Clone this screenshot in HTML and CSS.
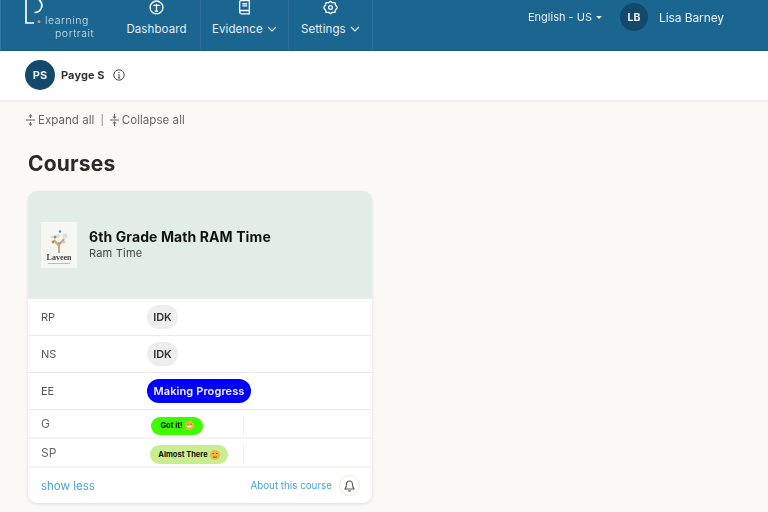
FILE: index.html
```html
<!DOCTYPE html>
<html lang="en">
<head>
<meta charset="utf-8">
<title>Learning Portrait</title>
<link rel="stylesheet" href="styles.css">
</head>
<body>
<div class="page">
<header class="topbar">
  <div class="logo">
    <svg class="logo-mark" width="20" height="26" viewBox="0 0 20 26"><path d="M1 0V23H9M9.500 12.500C16 12.500 20 5 13.500 -1" fill="none" stroke="#fff" stroke-width="1.700"/><circle cx="14" cy="21.700" r="1.400" fill="#e8963a"/></svg>
    <div class="logo-text"><span>learning</span><span class="logo-second">portrait</span></div>
  </div>
  <nav class="nav">
    <a class="nav-item nav-dash">
      <svg class="nav-icon" width="15" height="15" viewBox="0 0 14 14"><circle cx="7" cy="7" r="6" fill="none" stroke="#fff" stroke-width="1.300"/><path d="M4 5H10M7 3.500V10.500M5.500 10.500H8.500" fill="none" stroke="#fff" stroke-width="1.200"/></svg>
      <span>Dashboard</span>
    </a>
    <a class="nav-item nav-ev">
      <svg class="nav-icon" width="15" height="15" viewBox="0 0 14 14"><path d="M2.500 11V2C2.500 1 3 .5 4 .5H11.500V13H4C3 13 2.500 12.300 2.500 11.300C2.500 10.300 3 9.800 4 9.800H11.500M5 3.500H9.500M5 5.500H9.500" fill="none" stroke="#fff" stroke-width="1.200"/></svg>
      <span>Evidence <svg class="chev" width="10" height="6" viewBox="0 0 10 6"><path d="M1 1L5 5L9 1" fill="none" stroke="#e6eef4" stroke-width="1.200"/></svg></span>
    </a>
    <a class="nav-item nav-set">
      <svg class="nav-icon" width="15" height="15" viewBox="0 0 24 24"><circle cx="12" cy="12" r="3" fill="none" stroke="#fff" stroke-width="2"/><path d="M12 2L15 4.500L19 4L20 8L22.500 11V13L20 16L19 20L15 19.500L12 22L9 19.500L5 20L4 16L1.500 13V11L4 8L5 4L9 4.500Z" fill="none" stroke="#fff" stroke-width="2" stroke-linejoin="round"/></svg>
      <span>Settings <svg class="chev" width="10" height="6" viewBox="0 0 10 6"><path d="M1 1L5 5L9 1" fill="none" stroke="#e6eef4" stroke-width="1.200"/></svg></span>
    </a>
  </nav>
  <div class="account">
    <span class="lang">English - US <i class="caret"></i></span>
    <span class="avatar avatar-user">LB</span>
    <span class="user-name">Lisa Barney</span>
  </div>
</header>

<section class="student">
  <span class="avatar avatar-student">PS</span>
  <strong class="student-name">Payge S</strong>
  <svg width="12" height="12" viewBox="0 0 12 12"><circle cx="6" cy="6" r="5.200" fill="none" stroke="#444" stroke-width="1"/><path d="M6 5V9M6 3V4M4.800 9H7.200" fill="none" stroke="#444" stroke-width="1"/></svg>
</section>

<main class="content">
  <div class="toggles">
    <svg width="9" height="12" viewBox="0 0 9 12"><path d="M0 6H9" stroke="#666" stroke-width="1"/><path d="M4.500 4V1M4.500 8V11" stroke="#666"/><path d="M2.500 2.500L4.500 0L6.500 2.500ZM2.500 9.500L4.500 12L6.500 9.500Z" fill="#666"/></svg>
    <span class="toggle-label">Expand all</span>
    <span class="toggle-sep">|</span>
    <svg width="9" height="12" viewBox="0 0 9 12"><path d="M0 6H9" stroke="#666" stroke-width="1"/><path d="M4.500 0V3M4.500 12V9" stroke="#666"/><path d="M2.500 2.500L4.500 5L6.500 2.500ZM2.500 9.500L4.500 7L6.500 9.500Z" fill="#666"/></svg>
    <span class="toggle-label">Collapse all</span>
  </div>
  <h1 class="section-title">Courses</h1>
  <article class="card">
    <div class="card-head">
      <div class="school-logo">
        <svg width="26" height="26" viewBox="0 0 26 26"><circle cx="19" cy="8" r="2.500" fill="#e0dcd5"/><circle cx="12" cy="8" r="2" fill="#e0dcd5"/><circle cx="18" cy="14" r="1.500" fill="#d8cfc2"/><circle cx="6" cy="9" r="1.500" fill="#e0dcd5"/><path d="M13 25V14M13 18L8 12M13 17L18 11" fill="none" stroke="#c2a888" stroke-width="2"/><circle cx="9" cy="9" r="1.500" fill="#6fa35a"/><circle cx="14" cy="3.500" r="1.300" fill="#5a8fc2"/><circle cx="7" cy="14" r="1.400" fill="#d9813f"/></svg>
        <span class="school-name">Laveen</span>
      </div>
      <div class="course-text">
        <h2 class="course-title">6th Grade Math RAM Time</h2>
        <div class="course-sub">Ram Time</div>
      </div>
    </div>
    <div class="row">
      <span class="row-label">RP</span>
      <span class="pill pill-grey">IDK</span>
    </div>
    <div class="row">
      <span class="row-label">NS</span>
      <span class="pill pill-grey">IDK</span>
    </div>
    <div class="row">
      <span class="row-label">EE</span>
      <span class="pill pill-blue">Making Progress</span>
    </div>
    <div class="row row-small">
      <span class="row-label">G</span>
      <div class="small-cell"><span class="mini mini-green">Got it! <svg class="face" width="9" height="9" viewBox="0 0 10 10"><circle cx="5" cy="5" r="5" fill="#f0b63c"/><path d="M2.500 5.500H7.500C7.500 7.500 2.500 7.500 2.500 5.500Z" fill="#fff"/><path d="M2.500 3.500H4M6 3.500H7.500" stroke="#8a5a14"/></svg></span></div>
    </div>
    <div class="row row-small">
      <span class="row-label">SP</span>
      <div class="small-cell"><span class="mini mini-lime">Almost There <svg class="face" width="10" height="10" viewBox="0 0 10 10"><circle cx="5" cy="5" r="5" fill="#f0b63c"/><path d="M3 6.500C4 7.500 6 7.500 7 6.500" fill="none" stroke="#8a5a14"/><path d="M2.500 3.500H4M6 3.500H7.500" stroke="#8a5a14"/></svg></span></div>
    </div>
    <div class="card-foot">
      <a class="show-less">show less</a>
      <a class="about">About this course</a>
      <span class="bell">
        <svg width="11" height="12" viewBox="0 0 11 12"><path d="M5.500 1C3.500 1 2.500 2.500 2.500 4.500C2.500 7 1.500 8 1 9H10C9.500 8 8.500 7 8.500 4.500C8.500 2.500 7.500 1 5.500 1ZM4.300 10.500C4.800 11.300 6.200 11.300 6.700 10.500" fill="none" stroke="#555" stroke-width="1.100"/></svg>
      </span>
    </div>
  </article>
</main>
</div>
</body>
</html>
```

FILE: styles.css
```css
* { box-sizing: border-box; }
html, body { margin: 0; height: 100%; }
body {
  background: #fbf9f5;
  font-family: Inter, "Open Sans", "Liberation Sans", sans-serif;
  color: #333;
  overflow: hidden;
}
.page { height: 512px; overflow: hidden; filter: blur(0.35px); }

.topbar {
  height: 51px;
  background: #1a6691;
  border-left: 1px solid #2d7ba6;
  display: flex;
  align-items: flex-start;
  border-bottom: 1px solid #17608a;
  color: #e6eef4;
}
.logo { width: 112px; height: 50px; position: relative; flex: none; }
.logo-mark { position: absolute; left: 24px; top: 0; }
.logo-text {
  position: absolute; left: 44px; top: 14px;
  font-size: 10.500px; line-height: 13px; color: #cfe0ea; font-weight: 300; letter-spacing: .55px;
  display: flex; flex-direction: column;
}
.logo-second { padding-left: 10px; }

.nav { display: flex; height: 50px; }
.nav-item {
  display: flex; flex-direction: column; align-items: center;
  font-size: 11.500px;
  border-right: 1px solid #2a7099;
  color: #e6eef4;
  line-height: 16px;
  letter-spacing: .1px;
}
.nav-icon { display: block; margin-bottom: 6px; }
.nav-dash { width: 88px; }
.nav-ev { width: 88px; }
.nav-set { width: 84px; }
.chev { margin-left: 1px; vertical-align: 1px; }

.account {
  margin-left: auto;
  display: flex; align-items: center;
  height: 34px;
  padding-right: 44px;
}
.lang { font-size: 11px; color: #e6eef4; margin-right: 18px; }
.caret {
  display: inline-block; border: 3px solid transparent; border-top-color: #e6eef4; border-bottom: 0;
  vertical-align: 2px; margin-left: 1px;
}
.avatar {
  display: inline-flex; align-items: center; justify-content: center;
  border-radius: 50%; background: #134a6b; color: #eef3f6; font-weight: 700;
  flex: none;
}
.avatar-user { width: 28px; height: 28px; font-size: 10.500px; margin-right: 11px; }
.user-name { font-size: 12px; color: #eef3f6; letter-spacing: -.1px; }

.student {
  height: 49px; background: #fff;
  display: flex; align-items: center;
  padding-left: 25px;
  box-shadow: 0 1px 3px rgba(0,0,0,.08);
  padding-bottom: 1px;
}
.avatar-student { width: 30px; height: 30px; font-size: 11px; margin-right: 6px; }
.student-name { font-size: 11px; font-weight: 700; color: #333; margin-right: 8px; letter-spacing: .1px; }

.content { padding: 13px 0 0 26px; }
.toggles { display: flex; align-items: center; height: 14px; font-size: 11.500px; color: #666; margin-bottom: 24px; letter-spacing: .05px; }
.toggle-label { margin-left: 3px; }
.toggle-sep { margin: 0 6px; font-size: 10px; color: #777; }

.section-title { margin: 0 0 14px 2px; font-size: 21px; line-height: 26px; font-weight: 700; color: #2a2a2a; letter-spacing: .2px; }

.card {
  width: 344px; height: 312px; margin-left: 2px;
  background: #fff; border-radius: 9px;
  box-shadow: 0 1px 3px rgba(0,0,0,.12);
  overflow: hidden;
  display: flex; flex-direction: column;
}
.card-head {
  height: 108px; background: #e1ede6; flex: none;
  display: flex; align-items: center;
  padding: 0 0 0 13px;
}
.school-logo {
  width: 36px; height: 46px; background: #f6f6f3; flex: none;
  display: flex; flex-direction: column; align-items: center; padding-top: 6px;
  margin-right: 12px;
}
.school-logo::after { content: ""; width: 22px; height: 1px; background: #bbb; margin-top: 1px; }
.school-name { font-family: "Liberation Serif", serif; font-size: 8px; line-height: 8px; color: #444; font-weight: 700; }
.course-text { padding-bottom: 3px; }
.course-title { margin: 0; font-size: 14px; line-height: 18px; font-weight: 700; color: #111; letter-spacing: .1px; }
.course-sub { font-size: 11px; line-height: 14px; color: #444; letter-spacing: .2px; }

.row {
  height: 37px; flex: none;
  display: flex; align-items: center;
  padding-left: 13px;
  border-bottom: 1px solid #ebebeb;
}
.row-label { width: 106px; font-size: 11px; color: #555; flex: none; }
.pill {
  display: inline-flex; align-items: center; height: 24px;
  border-radius: 12px;
  font-size: 11px; font-weight: 600;
}
.pill-grey { background: #eee; color: #333; width: 31px; justify-content: center; }
.pill-blue { background: #0000ff; color: #f2f2ff; width: 104px; justify-content: center; white-space: nowrap; letter-spacing: .1px; }

.row-small { height: 29px; border-bottom: 2px solid #f4f4f2; padding-top: 4px; }
.row-small .row-label { font-size: 12px; color: #666; padding-bottom: 4px; }
.small-cell {
  flex: 1; height: 21px; display: flex; align-items: center;
  padding-left: 4px; position: relative;
}
.small-cell::after {
  content: ""; position: absolute; left: 96px; top: 0; height: 100%;
  width: 1px; background: #eee;
}
.mini {
  display: inline-flex; align-items: center; justify-content: center; gap: 2px;
  height: 18px; border-radius: 9px;
  font-size: 7.500px; font-weight: 700; color: #111; white-space: nowrap;
}
.mini-green { background: #3dfc00; width: 52px; }
.mini-lime { background: #c9ee8f; width: 78px; height: 19px; border-radius: 10px; margin-left: -1px; }
.face { display: block; flex: none; }

.card-foot {
  flex: 1; display: flex; align-items: center;
  padding: 0 12px 0 13px;
}
.show-less { font-size: 11.500px; color: #4aa3d6; }
.about { margin-left: auto; font-size: 9.800px; color: #4aa3d6; margin-right: 7px; }
.bell {
  width: 21px; height: 21px; border-radius: 50%; border: 1px solid #f0e6d8; background: #fff;
  display: flex; align-items: center; justify-content: center;
}
```
